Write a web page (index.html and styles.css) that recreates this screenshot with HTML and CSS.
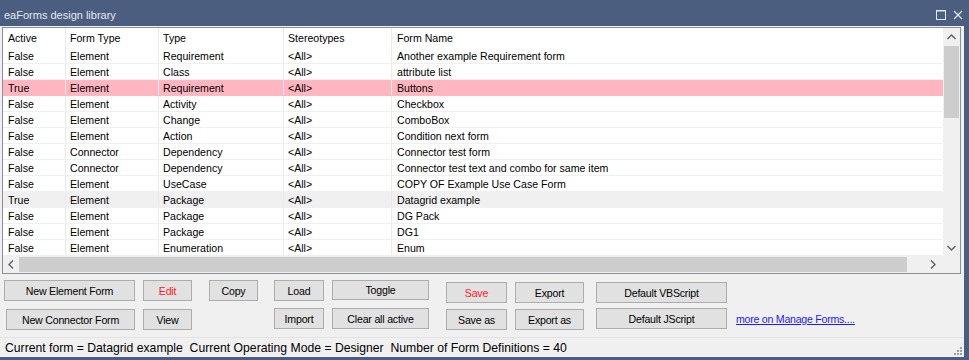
FILE: index.html
```html
<!DOCTYPE html>
<html>
<head>
<meta charset="utf-8">
<title>eaForms design library</title>
<link rel="stylesheet" href="styles.css">
</head>
<body>
<div class="window">
  <div class="titlebar">
    <span class="title">eaForms design library</span>
    <div class="caption-btns">
      <svg class="cap-icon" width="10" height="10" viewBox="0 0 10 10"><rect x="0.5" y="0.5" width="9" height="9" fill="none" stroke="#e3e8ef" stroke-width="1"/><line x1="0" y1="1" x2="10" y2="1" stroke="#e3e8ef" stroke-width="1"/></svg>
      <svg class="cap-icon" width="10" height="10" viewBox="0 0 10 10"><path d="M1 1 L9 9 M9 1 L1 9" stroke="#e3e8ef" stroke-width="1.2" fill="none"/></svg>
    </div>
  </div>
  <div class="client">
    <div class="grid">
      <div class="grid-main">
        <div class="data">
          <div class="row head"><div class="cell c1">Active</div><div class="cell c2">Form Type</div><div class="cell c3">Type</div><div class="cell c4">Stereotypes</div><div class="cell c5">Form Name</div></div>
          <div class="row"><div class="cell c1">False</div><div class="cell c2">Element</div><div class="cell c3">Requirement</div><div class="cell c4">&lt;All&gt;</div><div class="cell c5">Another example Requirement form</div></div>
          <div class="row"><div class="cell c1">False</div><div class="cell c2">Element</div><div class="cell c3">Class</div><div class="cell c4">&lt;All&gt;</div><div class="cell c5">attribute list</div></div>
          <div class="row pink"><div class="cell c1">True</div><div class="cell c2">Element</div><div class="cell c3">Requirement</div><div class="cell c4">&lt;All&gt;</div><div class="cell c5">Buttons</div></div>
          <div class="row"><div class="cell c1">False</div><div class="cell c2">Element</div><div class="cell c3">Activity</div><div class="cell c4">&lt;All&gt;</div><div class="cell c5">Checkbox</div></div>
          <div class="row"><div class="cell c1">False</div><div class="cell c2">Element</div><div class="cell c3">Change</div><div class="cell c4">&lt;All&gt;</div><div class="cell c5">ComboBox</div></div>
          <div class="row"><div class="cell c1">False</div><div class="cell c2">Element</div><div class="cell c3">Action</div><div class="cell c4">&lt;All&gt;</div><div class="cell c5">Condition next form</div></div>
          <div class="row"><div class="cell c1">False</div><div class="cell c2">Connector</div><div class="cell c3">Dependency</div><div class="cell c4">&lt;All&gt;</div><div class="cell c5">Connector test form</div></div>
          <div class="row"><div class="cell c1">False</div><div class="cell c2">Connector</div><div class="cell c3">Dependency</div><div class="cell c4">&lt;All&gt;</div><div class="cell c5">Connector test text and combo for same item</div></div>
          <div class="row"><div class="cell c1">False</div><div class="cell c2">Element</div><div class="cell c3">UseCase</div><div class="cell c4">&lt;All&gt;</div><div class="cell c5">COPY OF Example Use Case Form</div></div>
          <div class="row grey"><div class="cell c1">True</div><div class="cell c2">Element</div><div class="cell c3">Package</div><div class="cell c4">&lt;All&gt;</div><div class="cell c5">Datagrid example</div></div>
          <div class="row"><div class="cell c1">False</div><div class="cell c2">Element</div><div class="cell c3">Package</div><div class="cell c4">&lt;All&gt;</div><div class="cell c5">DG Pack</div></div>
          <div class="row"><div class="cell c1">False</div><div class="cell c2">Element</div><div class="cell c3">Package</div><div class="cell c4">&lt;All&gt;</div><div class="cell c5">DG1</div></div>
          <div class="row"><div class="cell c1">False</div><div class="cell c2">Element</div><div class="cell c3">Enumeration</div><div class="cell c4">&lt;All&gt;</div><div class="cell c5">Enum</div></div>
        </div>
        <div class="vscroll">
          <div class="arrow-box v"><svg width="9" height="6" viewBox="0 0 9 6"><path d="M0.5 5 L4.5 1 L8.5 5" stroke="#606060" stroke-width="1.4" fill="none"/></svg></div>
          <div class="vthumb"></div>
          <div class="vtrack"></div>
          <div class="arrow-box v"><svg width="9" height="6" viewBox="0 0 9 6"><path d="M0.5 1 L4.5 5 L8.5 1" stroke="#606060" stroke-width="1.4" fill="none"/></svg></div>
        </div>
      </div>
      <div class="hscroll-row">
        <div class="hscroll">
          <div class="arrow-box h"><svg width="6" height="9" viewBox="0 0 6 9"><path d="M5 0.5 L1 4.5 L5 8.5" stroke="#606060" stroke-width="1.4" fill="none"/></svg></div>
          <div class="hthumb"></div>
          <div class="arrow-box h right"><svg width="6" height="9" viewBox="0 0 6 9"><path d="M1 0.5 L5 4.5 L1 8.5" stroke="#606060" stroke-width="1.4" fill="none"/></svg></div>
        </div>
        <div class="corner"></div>
      </div>
    </div>
    <div class="buttons">
      <button class="btn b-col1 r1">New Element Form</button>
      <button class="btn b-col2 r1 red">Edit</button>
      <button class="btn b-col3 r1 copy">Copy</button>
      <button class="btn b-col4 r1 load">Load</button>
      <button class="btn b-col5 r1 short">Toggle</button>
      <button class="btn b-col6 r1 low save red">Save</button>
      <button class="btn b-col7 r1 low">Export</button>
      <button class="btn b-col8 r1 low dflt">Default VBScript</button>

      <button class="btn b-col1 r2 low conn">New Connector Form</button>
      <button class="btn b-col2 r2 low">View</button>
      <button class="btn b-col4 r2 load">Import</button>
      <button class="btn b-col5 r2">Clear all active</button>
      <button class="btn b-col6 r2 low save">Save as</button>
      <button class="btn b-col7 r2 low">Export as</button>
      <button class="btn b-col8 r2 dflt">Default JScript</button>
      <a class="link b-col9 r2" href="#">more on Manage Forms....</a>
    </div>
    <div class="status">
      <span class="status-text">Current form = Datagrid example  Current Operating Mode = Designer  Number of Form Definitions = 40</span>
      <svg class="grip" width="9" height="9" viewBox="0 0 9 9" fill="#a0a0a0"><rect x="7" y="1" width="2" height="2"/><rect x="4" y="4" width="2" height="2"/><rect x="7" y="4" width="2" height="2"/><rect x="1" y="7" width="2" height="2"/><rect x="4" y="7" width="2" height="2"/><rect x="7" y="7" width="2" height="2"/></svg>
    </div>
  </div>
</div>
</body>
</html>
```
FILE: styles.css
```css
html, body {
  margin: 0;
  padding: 0;
  background: #4b5e80;
}

.window {
  width: 969px;
  height: 360px;
  background: #4b5e80;
  display: flex;
  flex-direction: column;
  font-family: "Liberation Sans", Arial, sans-serif;
}

.titlebar {
  height: 26px;
  flex: none;
  display: flex;
  align-items: center;
  padding: 0 6px 0 4px;
  color: #e3e8ef;
  font-size: 11px;
}

.title {
  padding-top: 4px;
}

.caption-btns {
  margin-left: auto;
  display: flex;
  gap: 7px;
  padding-top: 4px;
}

.client {
  width: 964px;
  height: 331px;
  flex: none;
  background: #f0f0f0;
  display: flex;
  flex-direction: column;
}

.grid {
  margin: 1px 0 0 2px;
  width: 959px;
  height: 247px;
  box-sizing: border-box;
  border: 1px solid #8a8f99;
  background: #ffffff;
  display: flex;
  flex-direction: column;
  flex: none;
}

.grid-main {
  display: flex;
  height: 228px;
}

.data {
  width: 940px;
  overflow: hidden;
  font-size: 10.6px;
  color: #000;
}

.row {
  display: flex;
  height: 16px;
  box-sizing: border-box;
  border-bottom: 1px solid #f0f0f0;
}

.row.head {
  height: 20px;
  border-bottom: none;
  padding-top: 1px;
}

.row.pink {
  background: #ffb6c1;
  border-bottom-color: #ffb6c1;
}

.row.grey {
  background: #f0f0f0;
}

.cell {
  box-sizing: border-box;
  border-right: 1px solid #ebebeb;
  padding-left: 4px;
  height: 100%;
  display: flex;
  align-items: center;
  white-space: nowrap;
  flex: none;
}

.row.head .cell {
  height: 20px;
  margin-top: -1px;
}

.c1 { width: 63px; padding-left: 5px; }
.c2 { width: 93px; }
.c3 { width: 125px; }
.c4 { width: 108px; }
.c5 { flex: 1; border-right: none; padding-left: 5px; }

.vscroll {
  width: 17px;
  background: #f0f0f0;
  display: flex;
  flex-direction: column;
}

.arrow-box {
  display: flex;
  align-items: center;
  justify-content: center;
  flex: none;
}

.arrow-box.v {
  height: 17px;
}

.vthumb {
  height: 72px;
  margin: 1px 1px 0 1px;
  background: #cdcdcd;
  flex: none;
}

.vtrack {
  flex: 1;
}

.hscroll-row {
  display: flex;
  height: 17px;
}

.hscroll {
  width: 940px;
  background: #f0f0f0;
  display: flex;
}

.arrow-box.h {
  width: 16px;
}

.arrow-box.h.right {
  margin-left: auto;
  width: 20px;
}

.hthumb {
  width: 888px;
  margin: 1px 0;
  background: #cdcdcd;
}

.corner {
  width: 17px;
  background: #f0f0f0;
}

.buttons {
  height: 63px;
  box-sizing: border-box;
  padding: 6px 0 8px 4px;
  display: grid;
  grid-template-columns: 131px 49px 58px 58px 97px 70px 69px 135px auto;
  grid-template-rows: 21px 21px;
  column-gap: 8px;
  row-gap: 7px;
  flex: none;
}

.btn {
  box-sizing: border-box;
  height: 21px;
  margin: 0;
  padding: 0;
  background: #e1e1e1;
  border: 1px solid #adadad;
  border-radius: 0;
  font-family: "Liberation Sans", Arial, sans-serif;
  font-size: 10.6px;
  letter-spacing: -0.2px;
  color: #000;
  text-align: center;
  white-space: nowrap;
}

.btn.red { color: #ff2020; }

.r1 { grid-row: 1; }
.r2 { grid-row: 2; }
.b-col1 { grid-column: 1; }
.b-col2 { grid-column: 2; }
.b-col3 { grid-column: 3; }
.b-col4 { grid-column: 4; }
.b-col5 { grid-column: 5; }
.b-col6 { grid-column: 6; }
.b-col7 { grid-column: 7; }
.b-col8 { grid-column: 8; }
.b-col9 { grid-column: 9; }

.copy { width: 49px; justify-self: end; }
.load { width: 50px; justify-self: end; }
.save { width: 61px; justify-self: end; }
.dflt { width: 131px; justify-self: end; }
.conn { width: 129px; justify-self: end; }
.short { height: 20px; }
.low { margin-top: 1px; }
.r1.low { margin-top: 2px; }

.link {
  align-self: center;
  margin-left: 1px;
  font-size: 10.6px;
  letter-spacing: -0.25px;
  color: #1a1aff;
  text-decoration: underline;
  white-space: nowrap;
}

.status {
  height: 20px;
  box-sizing: border-box;
  border-top: 1px solid #e4e4e4;
  display: flex;
  align-items: center;
  padding-left: 5px;
  padding-right: 2px;
  flex: none;
}

.status-text {
  font-size: 12.2px;
  white-space: pre;
  color: #000;
}

.grip {
  margin-left: auto;
  margin-top: 6px;
}
```
